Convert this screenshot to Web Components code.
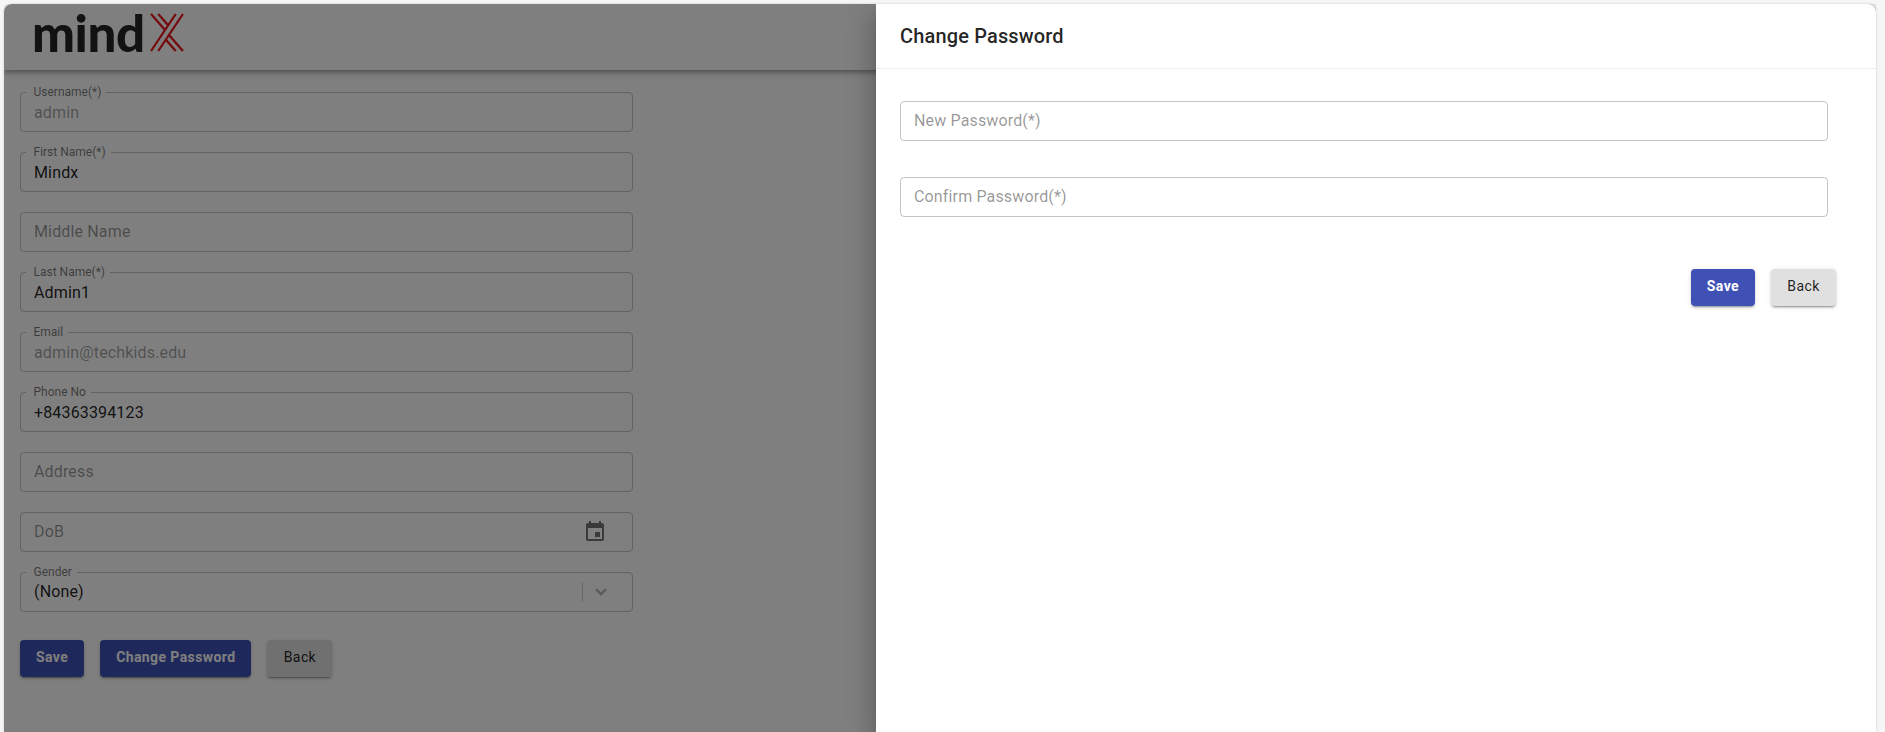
<!DOCTYPE html>
<html><head><meta charset="utf-8"><title>Change Password</title>
<style>
html,body{margin:0;padding:0;height:100%;overflow:hidden}
body{background:#f6f6f6;font-family:Roboto,"Liberation Sans",sans-serif;color:rgba(0,0,0,.87)}
</style></head><body>
<mx-app>
  <mx-header slot="header"></mx-header>
  <mx-field label="Username(*)" value="admin" disabled></mx-field>
  <mx-field label="First Name(*)" value="Mindx"></mx-field>
  <mx-field placeholder="Middle Name"></mx-field>
  <mx-field label="Last Name(*)" value="Admin1"></mx-field>
  <mx-field label="Email" value="admin@techkids.edu" disabled></mx-field>
  <mx-field label="Phone No" value="+84363394123"></mx-field>
  <mx-field placeholder="Address"></mx-field>
  <mx-field placeholder="DoB" icon="calendar"></mx-field>
  <mx-field label="Gender" value="(None)" icon="select"></mx-field>
  <mx-actions>
    <mx-button variant="primary">Save</mx-button>
    <mx-button variant="primary">Change Password</mx-button>
    <mx-button>Back</mx-button>
  </mx-actions>
  <mx-drawer slot="drawer" heading="Change Password">
    <mx-field placeholder="New Password(*)" wide></mx-field>
    <mx-field placeholder="Confirm Password(*)" wide></mx-field>
    <mx-actions slot="actions" end>
      <mx-button variant="primary">Save</mx-button>
      <mx-button>Back</mx-button>
    </mx-actions>
  </mx-drawer>
</mx-app>
<script>
function def(name, css, html){
  customElements.define(name, class extends HTMLElement{
    connectedCallback(){
      if(this.shadowRoot) return;
      const r=this.attachShadow({mode:'open'});
      r.innerHTML='<style>'+css+'</style>'+(typeof html==='function'?html(this):html);
    }
  });
}
const esc=s=>(s||'').replace(/&/g,'&amp;').replace(/</g,'&lt;');
def('mx-app',`
 :host{display:block;position:absolute;left:4px;top:4px;width:1872px;height:728px;background:#fff;border-radius:8px 8px 0 0;box-shadow:0 0 3px rgba(0,0,0,.16)}
 main{display:flex;flex-direction:column;gap:20px;padding:22px 0 0 16px;width:612.5px}
 .backdrop{position:absolute;inset:0;background:rgba(0,0,0,.5);border-radius:8px 8px 0 0}
`,`<slot name="header"></slot><main><slot></slot></main><div class="backdrop"></div><slot name="drawer"></slot>`);
def('mx-header',`
 :host{display:flex;align-items:center;height:66px;background:#fff;border-radius:8px 8px 0 0;box-shadow:0 2px 4px -1px rgba(0,0,0,.2),0 4px 5px 0 rgba(0,0,0,.14),0 1px 10px 0 rgba(0,0,0,.12);padding-left:28px;box-sizing:border-box;position:relative;clip-path:inset(0 0 -20px 0)}
 .logo{display:flex;align-items:flex-end;height:38px;margin-top:-8px}
 .t{font:900 51px/38px Lato,sans-serif;letter-spacing:-.4px;color:#252525;height:38px}
 svg{display:block;margin-left:5px}
`,`<div class="logo"><span class="t">mind</span><svg width="35" height="39" viewBox="0 0 34 39" preserveAspectRatio="none" fill="none" stroke="#e8141c" stroke-width="2.2"><path d="M32 1L8 38M25 1L1 38M1 1L14.6 17M8 1L17.6 12.3M15.4 26.7L25 38M18.4 22L32 38"/></svg></div>`);
def('mx-field',`
 :host{display:block;position:relative;box-sizing:border-box;height:40px;border:1px solid rgba(0,0,0,.23);border-radius:4px;font-size:16px;letter-spacing:.15px}
 :host([wide]){width:928px}
 .label{position:absolute;left:4.5px;top:-8px;padding:0 5px 0 8px;font-size:12px;line-height:14px;color:rgba(0,0,0,.54);letter-spacing:0;background:linear-gradient(transparent 6px,#fff 6px,#fff 9px,transparent 9px)}
 .v{position:absolute;left:13px;top:0;bottom:0;display:flex;align-items:center}
 .v.val{color:rgba(0,0,0,.87)}
 :host([disabled]) .v.val{color:rgba(0,0,0,.38)}
 :host([icon=select]) .v.val{padding-bottom:2px}
 .v.ph{color:rgba(0,0,0,.42);padding-bottom:2px}
 svg.cal{position:absolute;right:25px;top:7px}
 .sep{position:absolute;right:49px;top:9px;height:20px;width:1px;background:rgba(0,0,0,.2)}
 svg.chev{position:absolute;right:25px;top:15px}
`,h=>{
 const l=h.getAttribute('label'),v=h.getAttribute('value'),p=h.getAttribute('placeholder'),i=h.getAttribute('icon');
 let s='';
 if(l) s+=`<span class="label">${esc(l)}</span>`;
 if(v) s+=`<span class="v val">${esc(v)}</span>`;
 if(p) s+=`<span class="v ph">${esc(p)}</span>`;
 if(i==='calendar') s+=`<svg class="cal" width="24" height="24" viewBox="0 0 24 24" fill="rgba(0,0,0,.54)"><path d="M17 12h-5v5h5v-5zM16 1v2H8V1H6v2H5c-1.11 0-1.99.9-1.99 2L3 19c0 1.1.89 2 2 2h14c1.1 0 2-.9 2-2V5c0-1.1-.9-2-2-2h-1V1h-2zm3 18H5V8h14v11z"/></svg>`;
 if(i==='select') s+=`<span class="sep"></span><svg class="chev" width="12" height="8" viewBox="0 0 12 8" fill="none" stroke="rgba(0,0,0,.28)" stroke-width="2.4"><path d="M1 1.2L6 6.2L11 1.2"/></svg>`;
 return s;
});
def('mx-actions',`
 :host{display:flex;gap:16px;margin-top:8px}
 :host([end]){justify-content:flex-end;margin-top:0}
`,`<slot></slot>`);
def('mx-button',`
 :host{display:inline-flex;align-items:center;justify-content:center;height:37px;padding:0 16px 4px;border-radius:4px;background:#e0e0e0;color:rgba(0,0,0,.87);font-size:14px;font-weight:400;letter-spacing:.4px;box-shadow:0 3px 1px -2px rgba(0,0,0,.2),0 2px 2px 0 rgba(0,0,0,.14),0 1px 5px 0 rgba(0,0,0,.12);box-sizing:border-box;min-width:65px}
 :host([variant=primary]){background:#3f51b5;color:#fff;font-weight:700;letter-spacing:.4px;min-width:64px}
`,`<slot></slot>`);
def('mx-drawer',`
 :host{display:flex;flex-direction:column;position:absolute;left:872px;top:0;bottom:0;width:1000px;background:#fff;border-radius:0 8px 0 0;box-shadow:0 8px 10px -5px rgba(0,0,0,.2),0 16px 24px 2px rgba(0,0,0,.14),0 6px 30px 5px rgba(0,0,0,.12);clip-path:inset(0 0 0 -60px)}
 header{height:65px;box-sizing:border-box;border-bottom:1px solid #eee;padding-left:24px;display:flex;align-items:center;font-size:20px;font-weight:500;letter-spacing:.15px;color:rgba(0,0,0,.87);padding-bottom:1px}
 .body{display:flex;flex-direction:column;gap:36px;padding:32px 0 0 24px}
 .foot{padding:52px 40px 0 0}
`,h=>`<header>${esc(h.getAttribute('heading'))}</header><div class="body"><slot></slot></div><div class="foot"><slot name="actions"></slot></div>`);
</script>
</body></html>
